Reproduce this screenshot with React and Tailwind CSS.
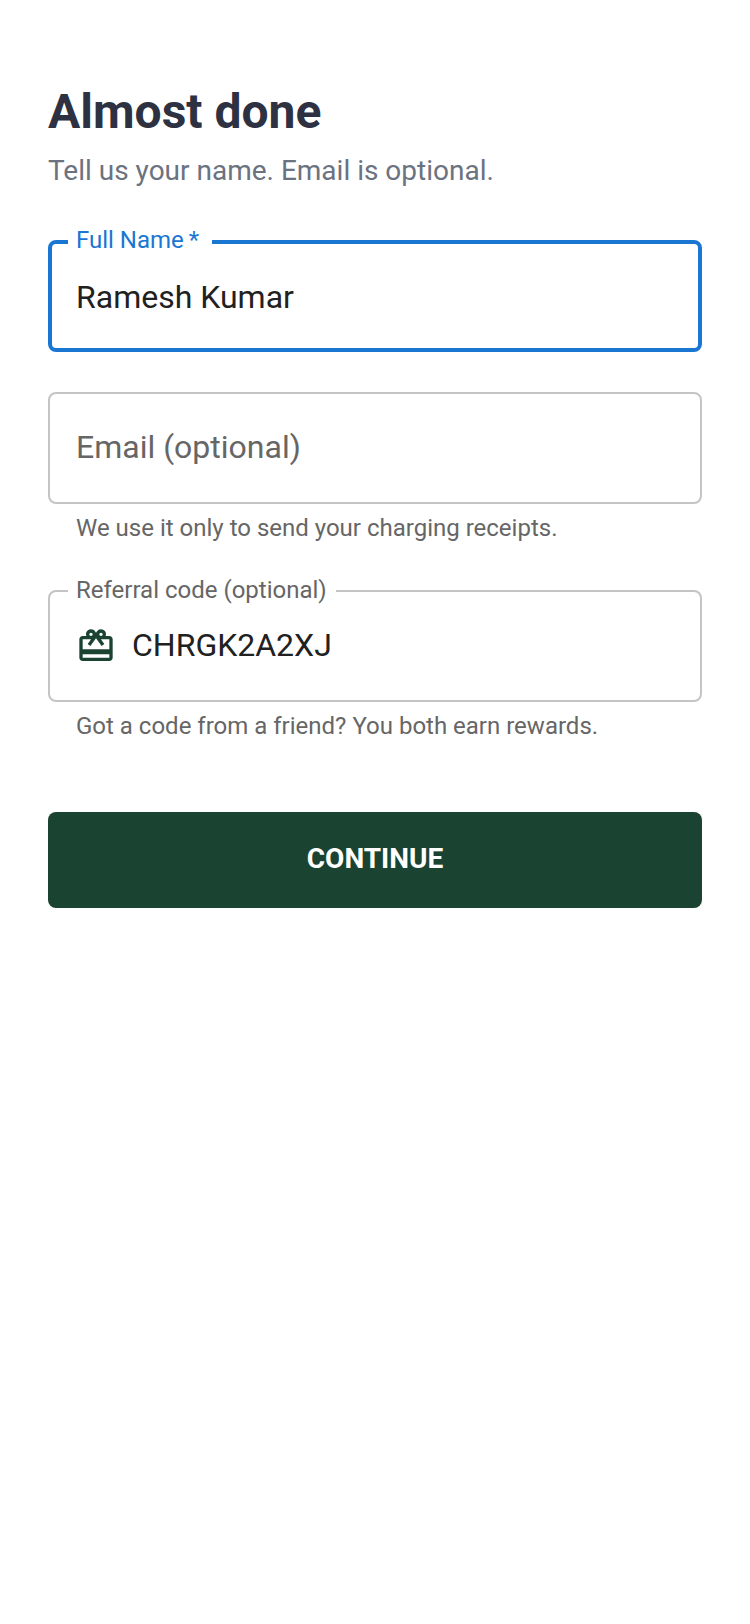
import React from 'react';
import { MdOutlineCardGiftcard } from 'react-icons/md';

const Field = ({ label, focused, helper, children }) => {
  return (
    <div className="mb-10">
      <div
        className={`relative flex items-center h-28 rounded-lg ${
          focused ? 'border-4 border-[#1976d2] px-[24px] pt-[2px]' : 'border-2 border-[#c4c4c4] px-[26px] pb-[3px]'
        }`}
      >
        {label && (
          <span
            className={`absolute bg-white pl-2 text-2xl leading-[36px] ${
              focused ? 'text-[#1976d2] left-[16px] -top-[22px] pr-[13px]' : 'text-[#666666] -top-[20px] left-[18px] pr-[9px]'
            }`}
          >
            {label}
          </span>
        )}
        {children}
      </div>
      {helper && <p className="mt-1 pb-0.5 px-7 text-2xl leading-10 text-[#666666]">{helper}</p>}
    </div>
  );
};

export default function App() {
  return (
    <div className="min-h-screen bg-white px-12 pt-[82px] font-['Roboto',sans-serif]">
      {/* Header */}
      <h1 className="text-5xl leading-[60px] font-bold text-[#2d3142]">Almost done</h1>
      <p className="mt-2 mb-12 text-[28px] leading-[42px] text-[#6b7280]">Tell us your name. Email is optional.</p>

      {/* Form */}
      <Field label={'Full Name\u2009*'} focused>
        <span className="text-[32px] text-[#212121]">Ramesh Kumar</span>
      </Field>

      <Field helper="We use it only to send your charging receipts.">
        <span className="text-[32px] text-[#666666]">Email (optional)</span>
      </Field>

      <Field label="Referral code (optional)" helper="Got a code from a friend? You both earn rewards.">
        <MdOutlineCardGiftcard className="mt-[2px] mr-4 h-10 w-10 text-[#1b4332]" />
        <span className="text-[32px] text-[#212121]">CHRGK2A2XJ</span>
      </Field>

      <button className="mt-6 h-24 w-full rounded-lg bg-[#1b4332] pb-[2px] text-[28px] font-bold text-white">CONTINUE</button>
    </div>
  );
}
